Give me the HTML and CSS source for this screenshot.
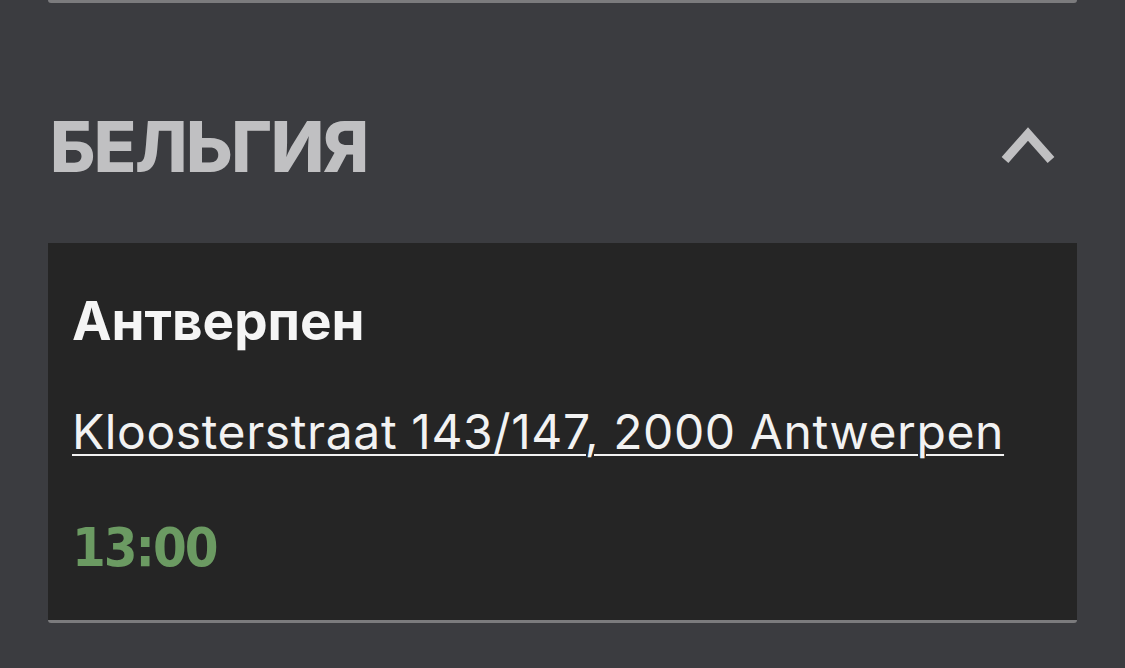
FILE: index.html
```html
<!DOCTYPE html>
<html lang="ru">
<head>
<meta charset="utf-8">
<title>Бельгия</title>
<link rel="stylesheet" href="styles.css">
</head>
<body>
<div class="prev-card"></div>
<section class="country">
  <div class="country-head">
    <h2 class="country-title">БЕЛЬГИЯ</h2>
    <svg class="chevron" width="66" height="46" viewBox="0 0 66 46" aria-hidden="true">
      <polyline points="10,36 33,10 56,36" fill="none" stroke="#c0c0c2" stroke-width="9" stroke-linecap="butt" stroke-linejoin="miter"/>
    </svg>
  </div>
  <div class="city-card">
    <h3 class="city-name">Антверпен</h3>
    <a class="city-address" href="#">Kloosterstraat 143/147, 2000 Antwerpen</a>
    <div class="city-time">13:00</div>
  </div>
</section>
</body>
</html>
```
FILE: styles.css
```css
html, body {
  margin: 0;
  padding: 0;
}
body {
  background: #3b3c40;
  width: 1125px;
  height: 668px;
  overflow: hidden;
  font-family: Inter, "Noto Sans", sans-serif;
}
.prev-card {
  margin-left: 48px;
  width: 1029px;
  height: 3px;
  background: #7b7b7d;
  border-radius: 0 0 3px 3px;
}
.country {
  padding-top: 109px;
}
.country-head {
  display: flex;
  align-items: center;
  justify-content: space-between;
  padding-left: 50px;
  padding-right: 64px;
}
.country-title {
  margin: 0;
  font-size: 70px;
  line-height: 70px;
  font-weight: 800;
  color: #c0c0c2;
  letter-spacing: -1.5px;
}
.chevron {
  display: block;
}
.city-card {
  margin: 61px 0 0 48px;
  width: 1029px;
  box-sizing: border-box;
  background: #252525;
  border-bottom: 3px solid #7b7b7d;
  border-radius: 0 0 3px 3px;
  padding: 52px 24px 45px;
  display: flex;
  flex-direction: column;
  align-items: flex-start;
}
.city-name {
  margin: 0;
  font-size: 53px;
  line-height: 52px;
  font-weight: 700;
  color: #f5f5f5;
}
.city-address {
  margin-top: 61px;
  font-size: 48px;
  line-height: 48px;
  font-weight: 400;
  color: #f2f2f2;
  letter-spacing: 0.6px;
  text-decoration: underline;
  text-decoration-thickness: 2px;
  text-underline-offset: 5px;
}
.city-time {
  margin-top: 64px;
  font-family: "DejaVu Sans Condensed", "DejaVu Sans", sans-serif;
  font-stretch: condensed;
  font-size: 54px;
  line-height: 55px;
  font-weight: 700;
  letter-spacing: -2px;
  color: #6b9a62;
}
```
